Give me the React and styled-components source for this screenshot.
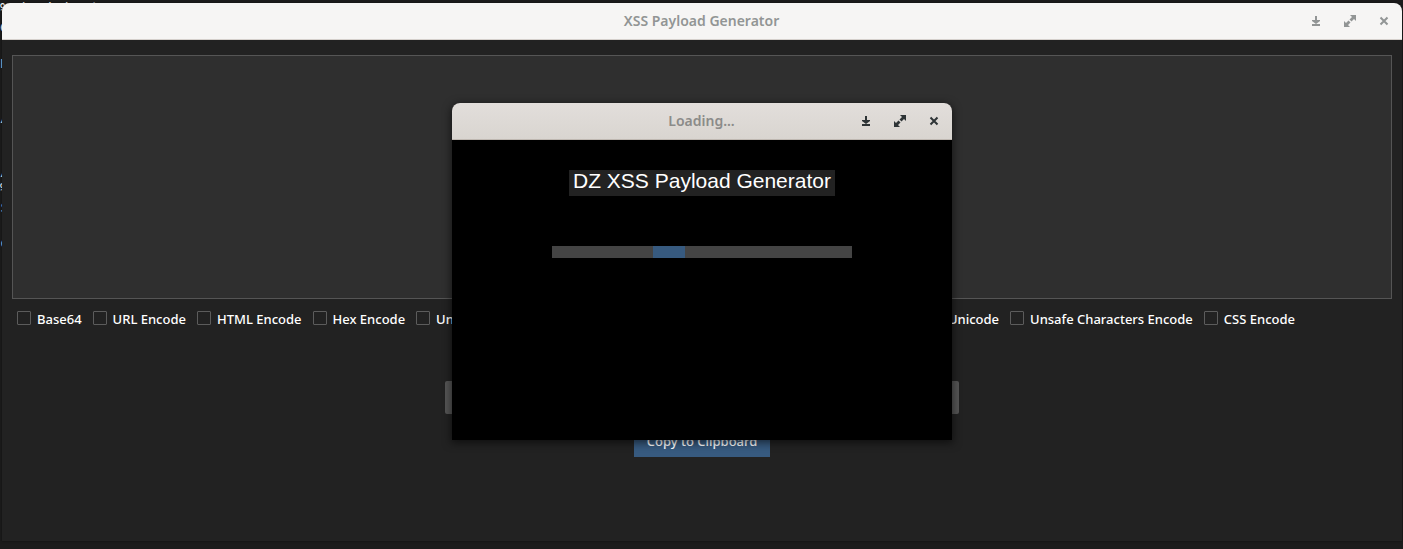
import React from "react";
import styled, { createGlobalStyle, css } from "styled-components";

const GlobalStyle = createGlobalStyle`
  * { box-sizing: border-box; }
  body {
    margin: 0;
    background: #1c1c1c;
    color: #fff;
    font-family: "Noto Sans", "Open Sans", sans-serif;
    font-size: 13px;
  }
`;

const Desktop = styled.div`
  position: relative;
  display: flex;
  min-height: 100vh;
  padding: 3px 1px 8px 2px;
  overflow: hidden;
`;

const Terminal = styled.pre`
  position: absolute;
  top: 0;
  left: 0;
  margin: 0;
  font: 15px/18px "DejaVu Sans Mono", monospace;
  color: #fff;
`;

const MainWindow = styled.main`
  position: relative;
  flex: 1;
  display: flex;
  flex-direction: column;
  border-radius: 8px 8px 0 0;
  background: #222;
  box-shadow: 0 0 3px rgba(0, 0, 0, 0.5);
`;

const TitleBar = styled.header`
  display: grid;
  grid-template-columns: 1fr auto 1fr;
  align-items: center;
  height: 37px;
  padding-right: 1px;
  border-radius: 8px 8px 0 0;
  ${({ $front }) =>
    $front
      ? css`
          background: linear-gradient(#e2dedb, #d9d5d0);
          border-bottom: 1px solid #bfb8b1;
          color: #2e3436;
        `
      : css`
          background: #f6f5f4;
          border-bottom: 1px solid #d5d0cc;
          color: #929595;
        `}
`;

const WindowTitle = styled.h1`
  grid-column: 2;
  margin: 0;
  font: 600 14px/20px "Noto Sans", sans-serif;
  color: ${({ $front }) => ($front ? "#8b8b89" : "#929595")};
`;

const Controls = styled.div`
  display: flex;
  justify-content: flex-end;
`;

const ControlButton = styled.button`
  display: grid;
  place-items: center;
  width: 34px;
  height: 34px;
  padding: 0;
  border: 0;
  background: none;
  color: inherit;
`;

const Content = styled.div`
  display: flex;
  flex-direction: column;
  align-items: center;
  padding: 15px 10px;
`;

const Output = styled.textarea`
  display: block;
  width: 100%;
  height: 244px;
  border: 1px solid #555;
  background: #2f2f2f;
  color: #fff;
  resize: none;
`;

const Options = styled.div`
  display: flex;
  justify-content: space-between;
  width: 100%;
  padding: 10px 97px 0 5px;
`;

const OptionGroup = styled.div`
  display: flex;
  gap: 11px;
`;

const Option = styled.label`
  display: flex;
  align-items: center;
  gap: 6px;
  font-weight: 500;
  line-height: 20px;
  white-space: nowrap;
`;

const Tick = styled.input`
  appearance: none;
  width: 14px;
  height: 14px;
  margin: 0 0 2px;
  border: 1px solid #5c5c5c;
  border-radius: 1px;
  background: #222;
`;

const PayloadField = styled.input`
  width: 514px;
  height: 33px;
  margin-top: 52px;
  border: 0;
  border-radius: 2px;
  background: #555;
  color: #fff;
`;

const CopyButton = styled.button`
  height: 33px;
  margin-top: 10px;
  padding: 0 13px;
  border: 0;
  background: #375a7f;
  color: #fff;
  font: 500 13px/20px "Noto Sans", sans-serif;
`;

const Dialog = styled.section`
  position: absolute;
  top: 100px;
  left: calc(50% - 250px);
  width: 500px;
  border-radius: 8px 8px 0 0;
  background: #000;
  box-shadow: 0 2px 8px 1px rgba(0, 0, 0, 0.55);
`;

const Splash = styled.div`
  display: flex;
  flex-direction: column;
  align-items: center;
  gap: 50px;
  height: 300px;
  padding-top: 30px;
`;

const SplashTitle = styled.h2`
  margin: 0;
  padding: 0 4px 4px;
  background: #222;
  font: 400 21px/22px "Liberation Sans", Arial, sans-serif;
`;

const Progress = styled.div`
  width: 300px;
  height: 12px;
  padding-left: 101px;
  background: #444;
`;

const Pulse = styled.div`
  width: 32px;
  height: 100%;
  background: #375a7f;
`;

function WindowControls() {
  return (
    <Controls>
      <ControlButton aria-label="Minimize">
        <svg width="14" height="14" viewBox="0 0 14 14" fill="currentColor">
          <path d="M6 2h2v4h3v1L7 10 3 7V6h3zM3 10h8v2H3z" />
        </svg>
      </ControlButton>
      <ControlButton aria-label="Maximize">
        <svg width="14" height="14" viewBox="0 0 14 14" fill="currentColor">
          <path d="M7 1h6v6l-2-2-2.5 2.5-2-2L9 3zM1 7l2 2 2.500-2.500 2 2L5 11l2 2H1z" />
        </svg>
      </ControlButton>
      <ControlButton aria-label="Close">
        <svg width="14" height="14" viewBox="0 0 14 14" fill="none" stroke="currentColor" strokeWidth="2">
          <path d="M3.500 3.500l7 7M10.500 3.500l-7 7" />
        </svg>
      </ControlButton>
    </Controls>
  );
}

function EncodeOption({ label }) {
  return (
    <Option>
      <Tick type="checkbox" />
      {label}
    </Option>
  );
}

const leading = ["Base64", "URL Encode", "HTML Encode", "Hex Encode", "Unicode"];
const trailing = ["Unicode", "Unsafe Characters Encode", "CSS Encode"];
const terminalText = "% (main) at\ne\n\nn\n\n\n/\n\n\n/\n%\ns\n\nc";

export default function App() {
  return (
    <>
      <GlobalStyle />
      <Desktop>
        <Terminal aria-hidden="true">{terminalText}</Terminal>
        <MainWindow>
          <TitleBar>
            <WindowTitle>XSS Payload Generator</WindowTitle>
            <WindowControls />
          </TitleBar>
          <Content>
            <Output aria-label="Payloads" />
            <Options>
              <OptionGroup>
                {leading.map((label) => <EncodeOption key={label} label={label} />)}
              </OptionGroup>
              <OptionGroup>
                {trailing.map((label) => <EncodeOption key={label} label={label} />)}
              </OptionGroup>
            </Options>
            <PayloadField type="text" aria-label="Payload" />
            <CopyButton>Copy to Clipboard</CopyButton>
          </Content>
          <Dialog role="dialog" aria-label="Loading">
            <TitleBar $front>
              <WindowTitle as="h2" $front>Loading...</WindowTitle>
              <WindowControls />
            </TitleBar>
            <Splash>
              <SplashTitle>DZ XSS Payload Generator</SplashTitle>
              <Progress role="progressbar" aria-label="Loading">
                <Pulse />
              </Progress>
            </Splash>
          </Dialog>
        </MainWindow>
      </Desktop>
    </>
  );
}
